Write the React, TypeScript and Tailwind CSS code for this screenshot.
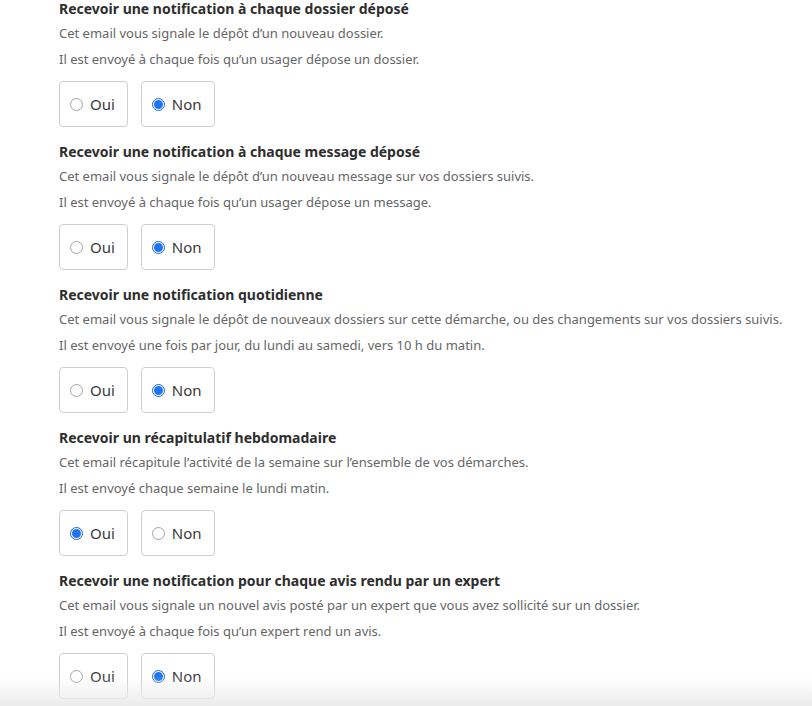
import React, { useState } from "react";

const sections = [
  {
    id: "dossier",
    title: "Recevoir une notification à chaque dossier déposé",
    lines: ["Cet email vous signale le dépôt d’un nouveau dossier.", "Il est envoyé à chaque fois qu’un usager dépose un dossier."],
    value: "non",
  },
  {
    id: "message",
    title: "Recevoir une notification à chaque message déposé",
    lines: ["Cet email vous signale le dépôt d’un nouveau message sur vos dossiers suivis.", "Il est envoyé à chaque fois qu’un usager dépose un message."],
    value: "non",
  },
  {
    id: "quotidien",
    title: "Recevoir une notification quotidienne",
    lines: [
      "Cet email vous signale le dépôt de nouveaux dossiers sur cette démarche, ou des changements sur vos dossiers suivis.",
      "Il est envoyé une fois par jour, du lundi au samedi, vers 10 h du matin.",
    ],
    value: "non",
  },
  {
    id: "hebdo",
    title: "Recevoir un récapitulatif hebdomadaire",
    lines: ["Cet email récapitule l’activité de la semaine sur l’ensemble de vos démarches.", "Il est envoyé chaque semaine le lundi matin."],
    value: "oui",
  },
  {
    id: "avis",
    title: "Recevoir une notification pour chaque avis rendu par un expert",
    lines: ["Cet email vous signale un nouvel avis posté par un expert que vous avez sollicité sur un dossier.", "Il est envoyé à chaque fois qu’un expert rend un avis."],
    value: "non",
  },
];

function Radio({ label, checked, onClick }: { label: string; checked: boolean; onClick: () => void }) {
  return (
    <button
      type="button"
      onClick={onClick}
      className="flex items-center h-[46px] pl-[10px] pr-[12px] border border-[#cfcfcf] rounded-[4px] bg-white"
    >
      {checked ? (
        <span className="flex items-center justify-center w-[13px] h-[13px] rounded-full border border-[#1565e0] bg-white">
          <span className="w-[9px] h-[9px] rounded-full bg-[#1f74f2]" />
        </span>
      ) : (
        <span className="w-[13px] h-[13px] rounded-full border border-[#a3a3ad] bg-white" />
      )}
      <span className="ml-[7px] text-[15px] text-[#3a3a3a]">{label}</span>
    </button>
  );
}

export default function App() {
  const [values, setvalues] = useState<Record<string, string>>(
    Object.fromEntries(sections.map((s) => [s.id, s.value]))
  );

  return (
    <div className="min-h-screen bg-white pl-[59px] pt-[1px] overflow-hidden" style={{ fontFamily: "'Noto Sans', Lato, sans-serif" }}>
      {sections.map((s, i) => (
        <div key={s.id} className={i > 0 ? "mt-[17px]" : ""}>
          <div className="text-[14px] leading-[15px] font-bold text-[#2e2e2e]">{s.title}</div>
          <div className="mt-[7px] text-[13px] leading-[20px] text-[#666]">{s.lines[0]}</div>
          <div className="mt-[6px] text-[13px] leading-[20px] text-[#666]">{s.lines[1]}</div>
          <div className="mt-[12px] flex gap-[13px]">
            <Radio label="Oui" checked={values[s.id] == "oui"} onClick={() => setvalues({ ...values, [s.id]: "oui" })} />
            <Radio label="Non" checked={values[s.id] == "non"} onClick={() => setvalues({ ...values, [s.id]: "non" })} />
          </div>
        </div>
      ))}
      <div className="fixed bottom-0 left-0 right-0 h-[30px] pointer-events-none bg-gradient-to-b from-white/0 to-[#ececec]" />
    </div>
  );
}
